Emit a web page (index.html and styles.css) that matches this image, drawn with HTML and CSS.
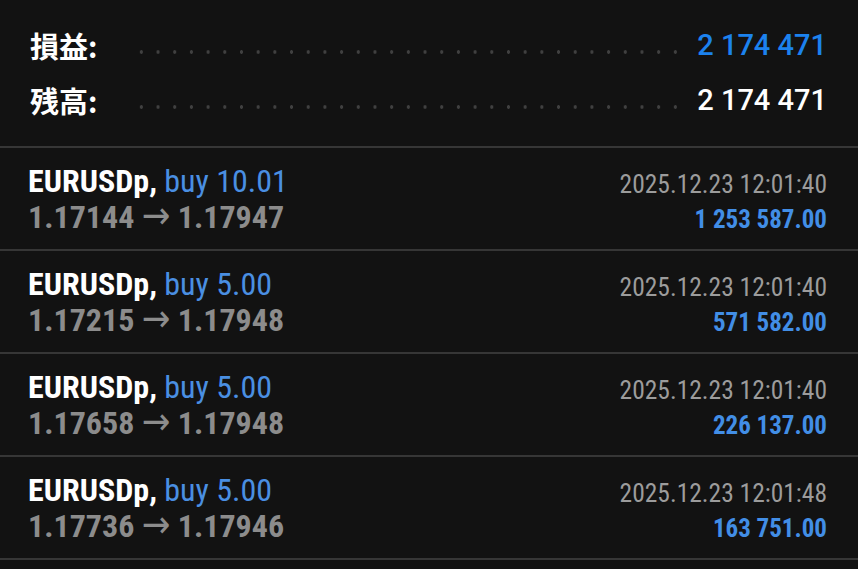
FILE: index.html
```html
<!DOCTYPE html>
<html lang="ja">
<head>
<meta charset="UTF-8">
<meta name="viewport" content="width=device-width, initial-scale=1.0">
<title>取引履歴</title>
<link rel="stylesheet" href="styles.css">
</head>
<body>

<div class="summary">
  <div class="summary-row">
    <span class="label">損益:</span>
    <span class="dots"></span>
    <span class="value profit">2 174 471</span>
  </div>
  <div class="summary-row">
    <span class="label">残高:</span>
    <span class="dots"></span>
    <span class="value">2 174 471</span>
  </div>
</div>

<ul class="deals">
  <li class="deal">
    <div class="deal-left">
      <div class="deal-title"><span class="symbol">EURUSDp,</span> <span class="type">buy 10.01</span></div>
      <div class="deal-price">1.17144 <span class="arrow">→</span> 1.17947</div>
    </div>
    <div class="deal-right">
      <div class="deal-time">2025.12.23 12:01:40</div>
      <div class="deal-profit">1 253 587.00</div>
    </div>
  </li>
  <li class="deal">
    <div class="deal-left">
      <div class="deal-title"><span class="symbol">EURUSDp,</span> <span class="type">buy 5.00</span></div>
      <div class="deal-price">1.17215 <span class="arrow">→</span> 1.17948</div>
    </div>
    <div class="deal-right">
      <div class="deal-time">2025.12.23 12:01:40</div>
      <div class="deal-profit">571 582.00</div>
    </div>
  </li>
  <li class="deal">
    <div class="deal-left">
      <div class="deal-title"><span class="symbol">EURUSDp,</span> <span class="type">buy 5.00</span></div>
      <div class="deal-price">1.17658 <span class="arrow">→</span> 1.17948</div>
    </div>
    <div class="deal-right">
      <div class="deal-time">2025.12.23 12:01:40</div>
      <div class="deal-profit">226 137.00</div>
    </div>
  </li>
  <li class="deal">
    <div class="deal-left">
      <div class="deal-title"><span class="symbol">EURUSDp,</span> <span class="type">buy 5.00</span></div>
      <div class="deal-price">1.17736 <span class="arrow">→</span> 1.17946</div>
    </div>
    <div class="deal-right">
      <div class="deal-time">2025.12.23 12:01:48</div>
      <div class="deal-profit">163 751.00</div>
    </div>
  </li>
</ul>

</body>
</html>
```

FILE: styles.css
```css
body {
  margin: 0;
  padding: 0;
  background-color: #121212;
  color: #fff;
  font-family: Roboto, 'Noto Sans CJK JP', sans-serif;
  overflow: hidden;
}
.summary {
  padding: 18px 31px 18px 30px;
  border-bottom: 2px solid #363636;
}
.summary-row {
  display: flex;
  align-items: center;
  height: 55px;
}
.summary-row .label {
  font-family: 'Noto Sans CJK JP', sans-serif;
  font-weight: bold;
  font-size: 29px;
  line-height: 1;
}
.summary-row .dots {
  flex: 1;
  height: 4px;
  margin: 12px 15px 0 36px;
  background-image: radial-gradient(circle, #404040 1.5px, transparent 2px);
  background-size: 16.7px 4px;
  background-repeat: repeat-x;
}
.summary-row .value {
  font-size: 29px;
  font-weight: 500;
  line-height: 1;
}
.summary-row .profit {
  color: #1c82ee;
}
.deals {
  list-style: none;
  margin: 0;
  padding: 0;
}
.deal {
  display: flex;
  justify-content: space-between;
  height: 101px;
  padding: 0 31px 0 28px;
  border-bottom: 2px solid #363636;
  font-family: 'Roboto Condensed', 'Liberation Sans Narrow', Roboto, sans-serif;
  font-stretch: condensed;
}
.deal-left {
  padding-top: 15px;
}
.deal-right {
  padding-top: 18px;
  text-align: right;
}
.deal-title, .deal-price {
  font-size: 32px;
  line-height: 36px;
  white-space: nowrap;
}
.deal-title .symbol {
  font-weight: bold;
  color: #fff;
}
.deal-title .type {
  color: #4a8fe2;
}
.deal-price {
  font-weight: bold;
  color: #8c8c8c;
}
.deal-price .arrow {
  font-family: 'DejaVu Sans', sans-serif;
  font-weight: normal;
  font-size: 38px;
  line-height: 0;
}
.deal-time {
  font-size: 25.5px;
  line-height: 36px;
  color: #9c9c9c;
}
.deal-profit {
  font-size: 25px;
  line-height: 36px;
  font-weight: bold;
  color: #428ee6;
}
```
